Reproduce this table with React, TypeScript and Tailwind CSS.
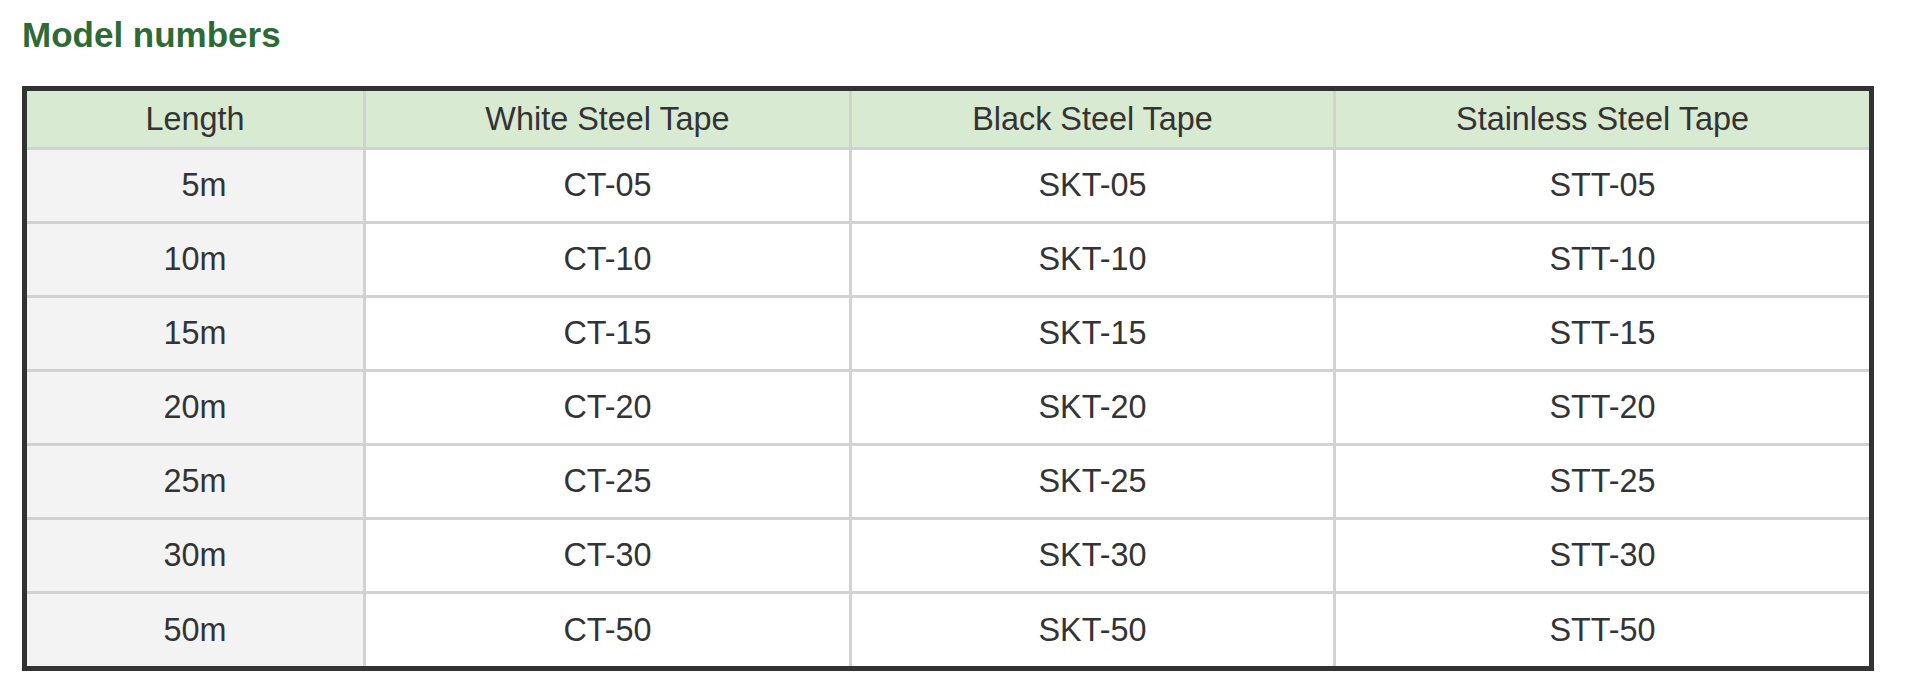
const headers = ["Length", "White Steel Tape", "Black Steel Tape", "Stainless Steel Tape"];

const rows = [
  ["\u20075m", "CT-05", "SKT-05", "STT-05"],
  ["10m", "CT-10", "SKT-10", "STT-10"],
  ["15m", "CT-15", "SKT-15", "STT-15"],
  ["20m", "CT-20", "SKT-20", "STT-20"],
  ["25m", "CT-25", "SKT-25", "STT-25"],
  ["30m", "CT-30", "SKT-30", "STT-30"],
  ["50m", "CT-50", "SKT-50", "STT-50"],
];

const cols = "grid grid-cols-[339px_486px_484px_1fr]";

export default function App() {
  return (
    <div className="min-h-[694px] bg-white pl-[22px] pt-[15px] font-['Liberation_Sans',Arial,sans-serif] text-[#333333]">
      <h2 className="text-[35px] leading-[40px] font-bold text-[#2e6a36]">Model numbers</h2>

      <div className="mt-[31px] w-[1852px] border-[5px] border-[#333333]">
        {/* header row */}
        <div className={`${cols} h-[59px] bg-[#d9ead3] border-b-[3px] border-[#d2d2d2]`}>
          {headers.map((h, i) => (
            <div
              key={h}
              className={`flex items-center justify-center text-[32.4px] ${i < 3 ? "border-r-[3px] border-[#d2d2d2]" : ""}`}
            >
              {h}
            </div>
          ))}
        </div>

        {rows.map((r, ri) => {
          const last = ri === rows.length - 1;
          return (
            <div
              key={ri}
              className={`${cols} ${last ? "h-[72px]" : "h-[74px] border-b-[3px] border-[#d2d2d2]"}`}
            >
              {r.map((c, ci) => (
                <div
                  key={ci}
                  className={`flex items-center justify-center text-[32.4px] whitespace-pre ${ci === 0 ? "bg-[#f3f3f3]" : "bg-white"} ${ci < 3 ? "border-r-[3px] border-[#d2d2d2]" : ""}`}
                >
                  {c}
                </div>
              ))}
            </div>
          );
        })}
      </div>
    </div>
  );
}
